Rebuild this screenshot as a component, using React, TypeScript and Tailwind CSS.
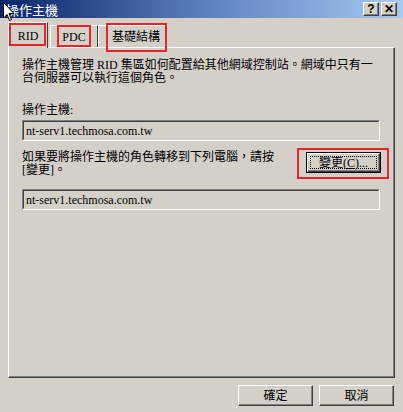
import React from "react";

const raised =
  "border border-t-white border-l-white border-r-[#404040] border-b-[#404040] shadow-[inset_-1px_-1px_0_#808080]";

function TitleBtn({ children }: { children: React.ReactNode }) {
  return (
    <div
      className={`w-[16px] h-[14px] bg-[#d4d0c8] ${raised} flex items-center justify-center text-black text-[12px] font-bold leading-none`}
      style={{ fontFamily: '"Liberation Sans", sans-serif' }}
    >
      {children}
    </div>
  );
}

function TextBox({ value }: { value: string }) {
  return (
    <div className="ml-[13px] w-[358px] h-[21px] border border-t-[#808080] border-l-[#808080] border-r-white border-b-white">
      <div className="h-full border border-t-[#404040] border-l-[#404040] border-r-[#d4d0c8] border-b-[#d4d0c8] flex items-center pl-[2px] text-[12px] leading-none text-black">
        {value}
      </div>
    </div>
  );
}

function Btn({ children, def }: { children: React.ReactNode; def?: boolean }) {
  if (def) {
    return (
      <div className="w-[75px] h-[21px] border border-black">
        <div className={`h-full bg-[#d4d0c8] ${raised} flex items-center justify-center p-[2px]`}>
          <div className="w-full h-full border border-dotted border-black flex items-center justify-center text-[12px] leading-none">
            {children}
          </div>
        </div>
      </div>
    );
  }
  return (
    <div className={`w-[75px] h-[21px] bg-[#d4d0c8] ${raised} flex items-center justify-center text-[12px] leading-none`}>
      {children}
    </div>
  );
}

export default function App() {
  return (
    <div
      className="relative w-[403px] h-[412px] bg-[#d4d0c8] overflow-hidden flex flex-col text-black"
      style={{ fontFamily: '"Liberation Serif", "Noto Sans CJK TC", serif' }}
    >
      {/* title bar */}
      <div className="h-[18px] flex items-center bg-gradient-to-r from-[#0a246a] via-[#5a7fc0] to-[#a6caf0]">
        <div
          className="pl-[6px] text-white text-[13px] leading-none flex-1"
          style={{ fontFamily: '"Noto Sans CJK TC", sans-serif' }}
        >
          操作主機
        </div>
        <div className="flex gap-[2px] mr-[6px]">
          <TitleBtn>?</TitleBtn>
          <TitleBtn>✕</TitleBtn>
        </div>
      </div>

      {/* tabs */}
      <div className="mt-[4px] h-[25px] ml-[8px] flex items-end">
        <div className="relative z-10 -mb-px h-[26px] w-[40px] bg-[#d4d0c8] border-t border-l border-t-white border-l-white border-r border-r-[#404040] flex items-center justify-center text-[12px] leading-none">
          RID
        </div>
        <div className="h-[22px] w-[48px] ml-[2px] border-t border-l border-t-white border-l-white border-r border-r-[#404040] flex items-center justify-center text-[12px] leading-none">
          PDC
        </div>
        <div className="h-[22px] w-[68px] border-t border-l border-t-white border-l-white border-r border-r-[#404040] flex items-center justify-start pl-[13px] text-[12px] leading-none">
          基礎結構
        </div>
      </div>

      {/* panel */}
      <div className="ml-[8px] w-[387px] h-[331px] border border-t-white border-l-white border-r-[#404040] border-b-[#404040] shadow-[inset_-1px_-1px_0_#808080] flex flex-col">
        <div className="pt-[11px] pl-[13px] text-[12px] leading-[13px]">
          <div>操作主機管理 RID 集區如何配置給其他網域控制站。網域中只有一</div>
          <div>台伺服器可以執行這個角色。</div>
        </div>
        <div className="mt-[19px] pl-[13px] text-[12px] leading-[13px]">操作主機:</div>
        <div className="mt-[3px]">
          <TextBox value="nt-serv1.techmosa.com.tw" />
        </div>
        <div className="mt-[10px] pl-[13px] pr-[13px] flex justify-between items-start">
          <div className="text-[12px] leading-[13px]">
            <div>如果要將操作主機的角色轉移到下列電腦，請按</div>
            <div>[變更]。</div>
          </div>
          <div className="mt-[1px]">
            <Btn def>
              變更(<span className="underline">C</span>)...
            </Btn>
          </div>
        </div>
        <div className="mt-[12px]">
          <TextBox value="nt-serv1.techmosa.com.tw" />
        </div>
      </div>

      {/* bottom buttons */}
      <div className="mt-[7px] flex justify-end gap-[6px] pr-[9px]">
        <Btn>確定</Btn>
        <Btn>取消</Btn>
      </div>

      {/* red annotation boxes */}
      <div className="absolute z-20 left-[9px] top-[23px] w-[37px] h-[23px] border-2 border-[#e4262c]" />
      <div className="absolute z-20 left-[57px] top-[25px] w-[34px] h-[22px] border-2 border-[#e4262c]" />
      <div className="absolute z-20 left-[106px] top-[23px] w-[61px] h-[29px] border-2 border-[#e4262c]" />
      <div className="absolute z-20 left-[297px] top-[148px] w-[92px] h-[31px] border-2 border-[#e4262c]" />

      {/* mouse cursor */}
      <svg className="absolute z-30 left-[3px] top-[2px]" width="12" height="20" viewBox="0 0 12 20">
        <path d="M0.5 0.5 L0.5 16 L4 12.5 L6.5 18.5 L8.5 17.5 L6 11.5 L11 11.5 Z" fill="white" stroke="black" strokeWidth="1" />
      </svg>
    </div>
  );
}
